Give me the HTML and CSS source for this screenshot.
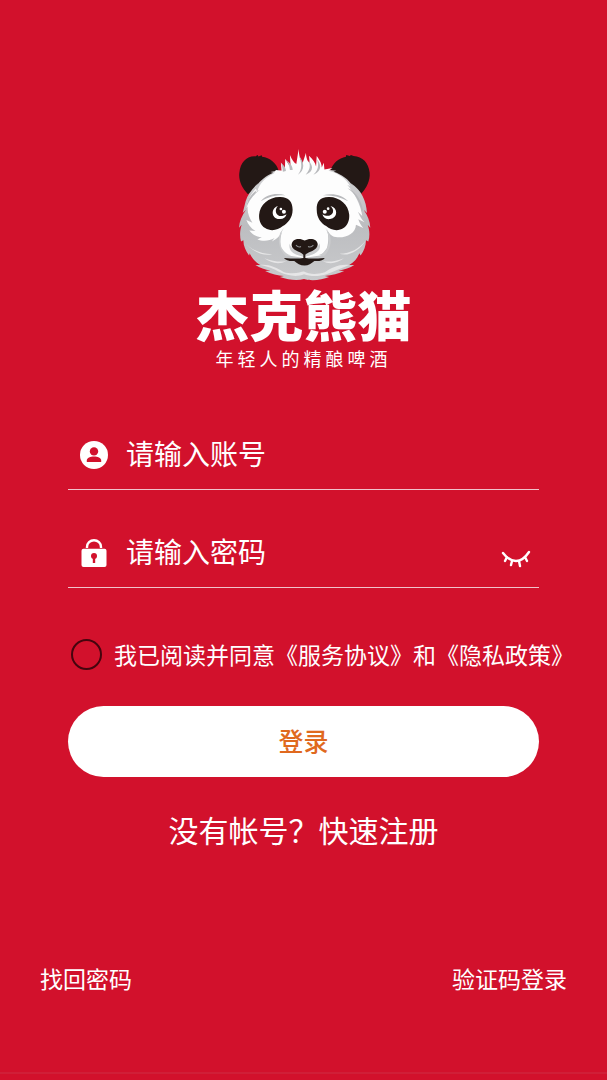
FILE: index.html
```
<!DOCTYPE html>
<html lang="zh-CN">
<head>
    <meta charset="UTF-8">
    <meta name="viewport" content="width=device-width, initial-scale=1.0">
    <title>登录 - 杰克熊猫</title>
    <link rel="stylesheet" href="styles.css">
</head>
<body>
    <div class="page">
        <header class="brand">
            <svg class="panda" viewBox="50 25 400 400" aria-hidden="true">
                <defs>
                    <linearGradient id="fur" x1="0" y1="0" x2="0" y2="1">
                        <stop offset="0" stop-color="#d4d4d6"/>
                        <stop offset="0.5" stop-color="#bcbdc0"/>
                        <stop offset="1" stop-color="#c9cacc"/>
                    </linearGradient>
                </defs>
                <!-- 耳朵 -->
                <path fill="#231815" d="M82 162 C65 145 54 122 57 99 C60 70 77 49 104 50 L112 46 L114 50 L124 47 L125 51 C148 54 168 70 174 92 L130 150 Z"/>
                <path fill="#231815" d="M420 162 C437 145 448 122 446 99 C443 70 425 50 398 49 L390 46 L387 49 L376 46 L375 51 C354 55 336 70 329 92 L372 150 Z"/>
                <!-- 脸 -->
                <path fill="url(#fur)" d="M172 92 L150 97 L158 99 C137 108 119 122 108 139 L113 130 C96 146 82 164 76 183 L67 219 L77 209 C65 226 57 243 56 263 L64 254 C58 272 58 289 62 304 L69 300 C69 317 76 332 86 346 L88 339 C94 354 106 366 119 374 L105 374 C118 383 134 388 150 391 L134 392 C151 401 174 405 190 407 L178 410 C205 419 230 422 250 416 C272 423 303 419 325 410 L312 407 C333 405 354 400 370 392 L353 391 C370 388 388 382 400 374 L385 374 C400 366 410 354 415 339 L419 346 C429 332 435 316 435 300 L442 304 C447 288 446 270 440 254 L448 263 C447 243 440 226 428 209 L438 219 C436 182 421 150 390 130 L396 139 C383 119 363 104 338 96 L346 93 L326 91 Z"/>
                <path fill="#fdfdfd" d="M183 94 L181 68 L193 86 L194 57 C200 68 205 76 210 81 L208 46 C214 61 220 68 227 73 L234 28 C235 49 239 60 246 70 L256 39 C256 55 261 64 267 70 L265 48 C277 60 284 69 286 80 L288 49 C299 64 303 73 303 83 L309 69 L311 89 L335 85 L323 93 C352 100 375 116 388 139 L379 135 C402 162 419 194 424 228 L411 215 C417 229 422 238 431 247 L412 238 C416 250 421 257 427 264 L405 254 C405 280 374 295 345 291 C330 289 322 277 317 264 C324 282 324 305 318 324 L302 345 L250 353 L199 345 L182 324 C176 304 181 281 189 263 C185 281 172 296 154 304 L162 294 C145 304 125 304 111 298 L124 291 C108 290 96 283 87 271 L105 273 C91 264 83 253 78 240 L96 248 C86 232 80 216 82 199 L77 205 C81 180 92 162 106 147 L111 155 C115 130 140 110 160 101 L166 91 Z"/>
                <!-- 毛发阴影 -->
                <path fill="#b9babd" d="M187 96 C186 84 184 77 181 70 C192 78 196 86 196 94 Z M208 91 C207 75 201 67 195 59 C211 71 217 82 216 91 Z M232 105 C245 88 244 70 235 48 C253 70 252 91 232 105 Z M255 105 C269 89 270 76 263 62 C281 80 276 96 255 105 Z M278 105 C292 92 296 78 288 58 C306 78 299 96 278 105 Z M77 207 C80 180 91 164 108 151 L105 158 L119 149 C96 167 84 184 77 207 Z M423 216 C416 181 402 160 380 145 C401 151 420 178 426 209 Z M121 184 C137 163 168 158 195 166 C168 165 146 169 121 184 Z M306 166 C337 158 364 165 382 184 C358 171 335 165 306 166 Z"/>
                <path fill="#cbccce" d="M190 263 C177 284 176 309 184 324 C192 336 200 343 211 345 L197 349 C176 330 170 302 179 278 Z M313 263 C326 284 328 306 319 324 C314 335 304 341 295 344 L309 348 C329 330 334 302 326 282 Z M207 310 C209 325 228 332 249 343 C269 332 291 325 296 309 C305 333 280 344 250 350 C217 343 203 332 207 310 Z"/>
                <path fill="#e6e6e7" d="M119 374 C145 371 169 383 189 395 C225 406 245 391 250 394 C265 402 287 404 312 396 C333 382 355 371 385 374 C363 383 341 392 317 402 C293 410 266 408 250 402 C230 411 199 406 180 397 C158 384 142 378 119 374 Z M69 300 C90 330 119 340 155 342 C125 350 91 331 69 300 Z M435 300 C413 327 390 338 356 341 C385 350 417 329 435 300 Z M132 354 C155 363 177 366 198 363 C173 374 151 368 132 354 Z M369 354 C347 363 327 366 306 363 C328 374 351 368 369 354 Z"/>
                <!-- 眼睛 -->
                <path fill="#231815" d="M116 224 C118 194 146 170 179 171 C205 171 216 186 216 209 C216 234 201 249 187 258 C171 271 151 275 134 264 C120 255 115 240 116 224 Z"/>
                <path fill="#231815" d="M385 224 C383 194 356 170 323 171 C297 171 287 186 288 209 C288 234 301 249 316 258 C331 271 351 275 368 264 C381 255 386 240 385 224 Z"/>
                <path fill="#fff" d="M172 198 C150 205 152 236 176 237 C188 238 195 232 198 223 C186 231 171 230 167 219 C164 211 167 204 172 198 Z"/>
                <circle fill="#fff" cx="181" cy="207" r="4"/>
                <circle fill="#fff" cx="190" cy="215" r="6"/>
                <path fill="#fff" d="M329 198 C352 203 352 234 328 237 C315 239 308 233 305 223 C317 231 332 228 336 218 C339 210 335 203 329 198 Z"/>
                <circle fill="#fff" cx="322" cy="206" r="4"/>
                <circle fill="#fff" cx="312" cy="215" r="6"/>
                <!-- 鼻子和嘴 -->
                <path fill="#231815" d="M213 313 C215 300 227 295 239 297 L252 301 L265 297 C278 295 290 301 291 312 C291 323 281 329 271 334 C263 337 256 341 254 344 L254 353 C269 356 286 355 312 353 C309 360 297 363 281 362 C271 370 264 376 252 376 C238 376 230 370 221 362 C207 363 195 360 190 353 C216 355 234 356 248 353 L248 344 C244 338 237 336 230 333 C220 328 213 323 213 313 Z"/>
                <path fill="none" stroke="#8d8e90" stroke-width="3" d="M226 315 Q233 323 241 319 M262 319 Q271 323 278 315"/>
            </svg>
            <h1 class="brand-name">杰克熊猫</h1>
            <p class="brand-slogan">年轻人的精酿啤酒</p>
        </header>

        <form class="login-form">
            <div class="field">
                <label for="account" aria-label="账号">
                    <svg class="field-icon" viewBox="0 0 28 28" aria-hidden="true">
                        <circle cx="14" cy="14" r="14" fill="#fff"/>
                        <circle cx="14" cy="10.4" r="4.2" fill="#d2112c"/>
                        <path d="M6.8 21 V19.6 C6.8 17 10.5 15.6 14 15.6 C17.5 15.6 21.2 17 21.2 19.6 V21 Z" fill="#d2112c"/>
                    </svg>
                </label>
                <input type="text" id="account" placeholder="请输入账号">
            </div>
            <div class="field">
                <label for="password" aria-label="密码">
                    <svg class="field-icon" viewBox="0 0 28 28" aria-hidden="true">
                        <path d="M7 9 V8 A7 6.8 0 0 1 21 8 V9" fill="none" stroke="#fff" stroke-width="2.4"/>
                        <rect x="1.5" y="9.8" width="25" height="18.2" rx="2" fill="#fff"/>
                        <circle cx="14" cy="17" r="3" fill="#d2112c"/>
                        <path d="M12.8 17 H15.2 V24 H12.8 Z" fill="#d2112c"/>
                    </svg>
                </label>
                <input type="password" id="password" placeholder="请输入密码">
                <button type="button" class="eye-button" aria-label="显示密码">
                    <svg viewBox="0 0 30 18" aria-hidden="true">
                        <path d="M2 3 Q8 11 15 11 Q22 11 28 2 M6 7 L4 11 M11 11 L10 15 M18 11 L19 16 M24 7 L26 11" fill="none" stroke="#fff" stroke-width="2.4" stroke-linecap="round"/>
                    </svg>
                </button>
            </div>

            <div class="agreement">
                <input type="checkbox" id="agree">
                <label for="agree">我已阅读并同意<a href="#">《服务协议》</a>和<a href="#">《隐私政策》</a></label>
            </div>

            <button type="submit" class="login-button">登录</button>
            <a class="register-link" href="#">没有帐号？快速注册</a>
        </form>

        <footer class="bottom-links">
            <a href="#">找回密码</a>
            <a href="#">验证码登录</a>
        </footer>
    </div>
</body>
</html>
```
FILE: styles.css
```
* {
    box-sizing: border-box;
}
body {
    margin: 0;
    background-color: #d2112c;
    color: #fff;
    font-family: "Noto Sans CJK SC", sans-serif;
}
a {
    color: inherit;
    text-decoration: none;
}
.page {
    display: flex;
    flex-direction: column;
    min-height: 100vh;
    padding: 148px 0 6px;
}
.brand {
    display: flex;
    flex-direction: column;
    align-items: center;
}
.panda {
    width: 134px;
    height: 134px;
}
.brand-name {
    margin: 0;
    font-size: 54px;
    line-height: 64px;
    font-weight: 900;
}
.brand-slogan {
    margin: 0;
    font-size: 18px;
    line-height: 24px;
    font-weight: 400;
    letter-spacing: 4px;
}
.login-form {
    display: flex;
    flex-direction: column;
    padding: 0 68px;
    margin-top: 50px;
}
.field {
    display: flex;
    align-items: center;
    height: 70px;
    margin-bottom: 28px;
    padding: 0 8px 0 12px;
    border-bottom: 1px solid #f0c3cb;
}
.field label {
    display: flex;
}
.field-icon {
    width: 28px;
    height: 28px;
}
.field input {
    flex: 1;
    min-width: 0;
    margin-left: 18px;
    padding: 0 0 4px;
    border: none;
    outline: none;
    background: none;
    color: #fff;
    font-family: inherit;
    font-size: 28px;
    line-height: 40px;
}
.field input::placeholder {
    color: #fff;
    opacity: 1;
}
.eye-button {
    padding: 12px 0 0;
    border: none;
    background: none;
    cursor: pointer;
}
.eye-button svg {
    display: block;
    width: 30px;
    height: 18px;
}
.agreement {
    display: flex;
    align-items: center;
    gap: 12px;
    margin-top: 20px;
    padding-left: 3px;
    font-size: 23px;
    line-height: 36px;
    white-space: nowrap;
}
.agreement input {
    appearance: none;
    flex: none;
    width: 31px;
    height: 31px;
    margin: 0;
    border: 2px solid #45050e;
    border-radius: 50%;
}
.agreement input:checked {
    background-color: #fff;
}
.login-button {
    height: 71px;
    margin-top: 34px;
    padding: 0 0 4px;
    border: none;
    border-radius: 36px;
    background-color: #fff;
    color: #e0691e;
    font-family: inherit;
    font-size: 25px;
    font-weight: 500;
    cursor: pointer;
}
.register-link {
    align-self: center;
    margin-top: 30px;
    font-size: 30px;
    line-height: 44px;
}
.bottom-links {
    display: flex;
    justify-content: space-between;
    margin-top: auto;
    padding: 0 40px 76px;
    border-bottom: 2px solid #d01f38;
    font-size: 23px;
    line-height: 36px;
}
```
